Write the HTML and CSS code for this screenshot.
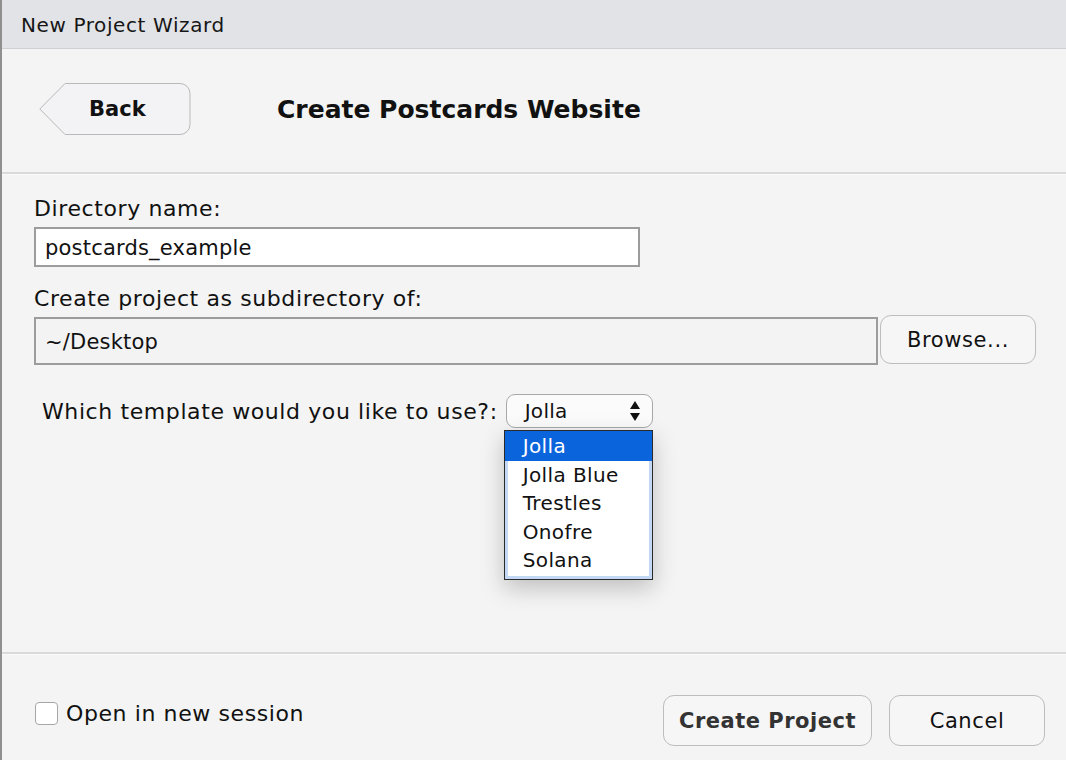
FILE: index.html
```html
<!DOCTYPE html>
<html>
<head>
<meta charset="utf-8">
<link rel="stylesheet" href="styles.css">
</head>
<body>
<div class="window">
  <div class="titlebar">New Project Wizard</div>
  <div class="header">
    <button class="back">
      <svg class="back-shape" width="152" height="52" viewBox="0 0 152 52">
        <path d="M26 0.5 H141 A10 10 0 0 1 151 10.5 V41.5 A10 10 0 0 1 141 51.5 H26 L0.8 26 Z" fill="#f3f3f5" stroke="#b9b9bb" stroke-width="1"/>
      </svg>
      <span class="back-label">Back</span>
    </button>
    <h1 class="title">Create Postcards Website</h1>
  </div>
  <div class="sep"></div>
  <div class="main">
    <div class="label">Directory name:</div>
    <div class="input input-white">postcards_example</div>
    <div class="label label2">Create project as subdirectory of:</div>
    <div class="row">
      <div class="input input-dir">~/Desktop</div>
      <button class="btn browse">Browse...</button>
    </div>
    <div class="template-row">
      <span class="template-label">Which template would you like to use?:</span>
      <div class="select-wrap">
        <div class="select">
          <span>Jolla</span>
          <svg class="arrows" width="12" height="22" viewBox="0 0 12 22">
            <path d="M6 1 L11 9 H1 Z" fill="#111"/>
            <path d="M6 21 L11 13 H1 Z" fill="#111"/>
          </svg>
        </div>
        <ul class="menu">
          <li class="sel">Jolla</li>
          <li>Jolla Blue</li>
          <li>Trestles</li>
          <li>Onofre</li>
          <li>Solana</li>
        </ul>
      </div>
    </div>
  </div>
  <div class="sep"></div>
  <div class="footer">
    <label class="check"><span class="box"></span><span>Open in new session</span></label>
    <div class="actions">
      <button class="btn create">Create Project</button>
      <button class="btn cancel">Cancel</button>
    </div>
  </div>
</div>
</body>
</html>
```
FILE: styles.css
```css
html, body {
  margin: 0;
  padding: 0;
  height: 100%;
}
body {
  background: #f3f4f3;
  font-family: "DejaVu Sans", sans-serif;
  color: #111;
}
.window {
  height: 760px;
  display: flex;
  flex-direction: column;
  border-left: 2px solid #8f8f8f;
  box-sizing: border-box;
}
.titlebar {
  height: 48px;
  line-height: 51px;
  background: #e2e3e6;
  border-bottom: 1px solid #cfd0d3;
  padding-left: 19px;
  font-size: 20px;
  letter-spacing: 0.6px;
  color: #161616;
}
.header {
  height: 123px;
  display: flex;
  align-items: center;
  padding-left: 37px;
}
.back {
  position: relative;
  width: 152px;
  height: 52px;
  padding: 0;
  border: none;
  background: none;
  margin-top: -3px;
  font-family: inherit;
}
.back-shape {
  display: block;
}
.back-label {
  position: absolute;
  left: 50px;
  top: 0;
  height: 52px;
  line-height: 52px;
  font-size: 21px;
  font-weight: bold;
  color: #111;
}
.title {
  margin: 0 0 0 86px;
  font-size: 25px;
  font-weight: bold;
  color: #111;
  margin-top: -3px;
}
.sep {
  height: 2px;
  background: #dadada;
  border-bottom: 1px solid #fafafa;
}
.main {
  flex: 1;
  padding: 20px 30px 0 32px;
  font-size: 22px;
  letter-spacing: 0.6px;
}
.label {
  height: 28px;
  line-height: 28px;
  color: #111;
}
.label2 {
  margin-top: 18px;
}
.input {
  box-sizing: border-box;
  border: 2px solid #9c9c9c;
  padding-left: 9px;
  color: #111;
  font-size: 21px;
  letter-spacing: 0.2px;
}
.input-white {
  margin-top: 4px;
  width: 606px;
  height: 40px;
  line-height: 38px;
  background: #fff;
}
.row {
  margin-top: 4px;
  display: flex;
  align-items: flex-start;
}
.input-dir {
  width: 844px;
  height: 48px;
  line-height: 47px;
  background: #f3f3f3;
}
.btn {
  box-sizing: border-box;
  border: 1.5px solid #bdbdbd;
  border-radius: 11px;
  background: #f6f6f7;
  font-family: "DejaVu Sans", sans-serif;
  font-size: 21px;
  letter-spacing: 0.6px;
  color: #111;
  padding: 0;
}
.browse {
  margin-left: 2px;
  margin-top: -2px;
  width: 156px;
  height: 49px;
}
.template-row {
  margin-top: 29px;
  padding-left: 8px;
  display: flex;
  align-items: center;
  height: 34px;
}
.select-wrap {
  position: relative;
  margin-left: 8px;
}
.select {
  box-sizing: border-box;
  width: 147px;
  height: 34px;
  border: 1.5px solid #a9a9a9;
  border-radius: 9px;
  background: #fbfbfb;
  display: flex;
  align-items: center;
  justify-content: space-between;
  padding: 0 11px 0 18px;
  font-size: 20px;
  letter-spacing: 0.3px;
}
.arrows {
  display: block;
}
.menu {
  position: absolute;
  left: -2px;
  top: 36px;
  width: 149px;
  box-sizing: border-box;
  margin: 0;
  padding: 1px 3px 4px 3px;
  list-style: none;
  background: #fff;
  border: 1px solid #2a2a2a;
  box-shadow: inset 0 0 0 3px #c2d8f5, 0 8px 22px rgba(0,0,0,0.22);
  font-size: 20px;
  letter-spacing: 0.4px;
}
.menu li {
  height: 28.5px;
  line-height: 28.5px;
  padding-left: 15px;
  color: #111;
  background: #fff;
}
.menu li.sel {
  margin: -1px -3px 0 -3px;
  padding-left: 18px;
  height: 29.5px;
  line-height: 31px;
  background: #0a64dc;
  color: #fff;
}
.footer {
  height: 105px;
  box-sizing: border-box;
  display: flex;
  justify-content: space-between;
  align-items: flex-start;
  padding: 40px 21px 0 33px;
}
.check {
  display: flex;
  align-items: center;
  margin-top: 6px;
  font-size: 22px;
  letter-spacing: 0.6px;
  color: #111;
}
.box {
  width: 23px;
  height: 23px;
  box-sizing: border-box;
  border: 1.5px solid #a6a6a6;
  border-radius: 4px;
  background: #fff;
  margin-right: 8px;
}
.actions {
  display: flex;
  gap: 17px;
}
.create {
  width: 209px;
  height: 51px;
  font-weight: bold;
  color: #333;
  letter-spacing: 0.5px;
}
.cancel {
  width: 156px;
  height: 51px;
}
```
